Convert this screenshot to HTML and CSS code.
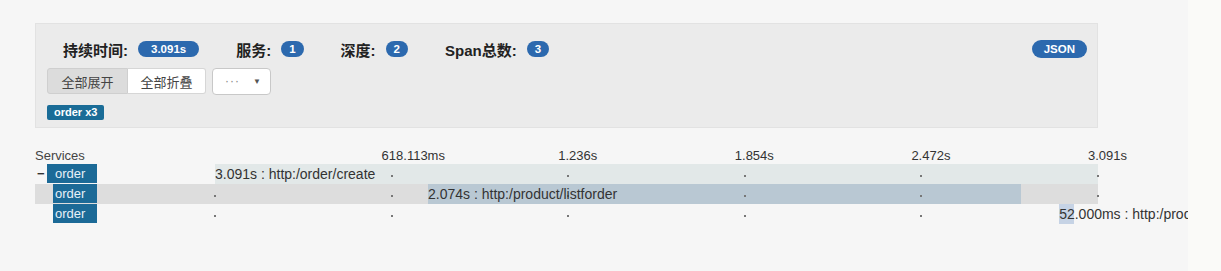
FILE: index.html
```html
<!DOCTYPE html>
<html lang="zh">
<head>
<meta charset="utf-8">
<title>Trace</title>
<link rel="stylesheet" href="styles.css">
</head>
<body>
<div class="page">
  <div class="main">
    <div class="panel">
      <div class="stats">
        <div class="stat"><span class="stat-label">持续时间:</span><span class="badge">3.091s</span></div>
        <div class="stat"><span class="stat-label">服务:</span><span class="badge num">1</span></div>
        <div class="stat"><span class="stat-label">深度:</span><span class="badge num">2</span></div>
        <div class="stat"><span class="stat-label">Span总数:</span><span class="badge num">3</span></div>
        <span class="badge json">JSON</span>
      </div>
      <div class="controls">
        <div class="btn-group">
          <button class="btn active">全部展开</button>
          <button class="btn">全部折叠</button>
        </div>
        <button class="dropdown"><span class="dots">···</span><span class="caret">▼</span></button>
      </div>
      <div class="tags"><span class="tag">order x3</span></div>
    </div>

    <div class="timeline">
      <div class="thead">
        <div class="svc-head">Services</div>
        <div class="scale">
          <span class="tick-label" style="left:20%">618.113ms</span>
          <span class="tick-label" style="left:40%">1.236s</span>
          <span class="tick-label" style="left:60%">1.854s</span>
          <span class="tick-label" style="left:80%">2.472s</span>
          <span class="tick-label" style="left:100%">3.091s</span>
        </div>
      </div>

      <div class="row">
        <div class="svc root"><span class="toggle">−</span><span class="svc-label">order</span></div>
        <div class="track">
          <i class="dot" style="left:20%"></i><i class="dot" style="left:40%"></i><i class="dot" style="left:60%"></i><i class="dot" style="left:80%"></i><i class="dot" style="left:100%"></i>
          <div class="bar bar-root" style="left:0%;width:100%"></div>
          <span class="span-text" style="left:0%">3.091s : http:/order/create</span>
        </div>
      </div>

      <div class="row hover">
        <div class="svc child"><span class="svc-label">order</span></div>
        <div class="track">
          <div class="bar bar-mid" style="left:24.13%;width:67.1%"></div>
          <i class="dot" style="left:0%"></i><i class="dot" style="left:20%"></i><i class="dot" style="left:40%"></i><i class="dot" style="left:60%"></i><i class="dot" style="left:80%"></i><i class="dot" style="left:100%"></i>
          <span class="span-text" style="left:24.13%">2.074s : http:/product/listforder</span>
        </div>
      </div>

      <div class="row">
        <div class="svc child"><span class="svc-label">order</span></div>
        <div class="track">
          <div class="bar bar-leaf" style="left:95.6%;width:1.68%"></div>
          <i class="dot" style="left:0%"></i><i class="dot" style="left:20%"></i><i class="dot" style="left:40%"></i><i class="dot" style="left:60%"></i><i class="dot" style="left:80%"></i>
          <span class="span-text" style="left:95.6%">52.000ms : http:/product/list</span>
        </div>
      </div>
    </div>
  </div>
  <div class="side"></div>
</div>
</body>
</html>
```

FILE: styles.css
```css
html, body {
  margin: 0;
  padding: 0;
}
body {
  background: #f6f6f6;
  font-family: "Liberation Sans", "Noto Sans CJK SC", Arial, sans-serif;
  color: #333;
}
.page {
  display: flex;
  width: 1221px;
  height: 271px;
}
.main {
  width: 1153px;
  padding-left: 35px;
  overflow: hidden;
}
.side {
  flex: 1;
  background: #fafaf8;
}

/* panel */
.panel {
  width: 1063px;
  margin-top: 23px;
  background: #ebebeb;
  border: 1px solid #e2e2e2;
  padding: 16px 10px 7px 11px;
  box-sizing: border-box;
}
.stats {
  display: flex;
  align-items: center;
  height: 18px;
  padding-left: 16px;
}
.stat {
  display: flex;
  align-items: center;
  margin-right: 37px;
}
.stat-label {
  font-size: 15px;
  font-weight: bold;
  color: #222;
  margin-right: 10px;
}
.badge {
  display: inline-block;
  height: 16px;
  line-height: 16px;
  border-radius: 9px;
  background: #2c69ae;
  color: #fff;
  font-size: 11.5px;
  font-weight: bold;
  padding: 0 13px;
}
.badge.num {
  padding: 0 8px;
}
.badge.json {
  margin-left: auto;
  height: 18px;
  line-height: 18px;
  padding: 0 12px;
}

.controls {
  display: flex;
  align-items: center;
  margin-top: 10px;
  height: 26px;
}
.btn-group {
  display: flex;
}
.btn {
  font-family: "Liberation Sans", "Noto Sans CJK SC", sans-serif;
  font-size: 13px;
  color: #444;
  height: 26px;
  padding: 0;
  text-align: center;
  white-space: nowrap;
  background: #fff;
  border: 1px solid #d6d6d6;
  margin: 0;
}
.btn:first-child {
  border-radius: 3px 0 0 3px;
  width: 81px;
}
.btn:last-child {
  border-left: none;
  border-radius: 0 3px 3px 0;
  width: 78px;
}
.btn.active {
  background: #dcdcdc;
  border-color: #cfcfcf;
}
.dropdown {
  margin-left: 6px;
  width: 59px;
  height: 27px;
  background: #fff;
  border: 1px solid #c8c8c8;
  border-radius: 4px;
  display: flex;
  align-items: center;
  padding: 0 0 0 12px;
  font-family: "Liberation Sans", sans-serif;
  color: #888;
}
.dots {
  font-size: 12px;
  letter-spacing: 1px;
}
.caret {
  font-size: 8px;
  margin-left: 13px;
  color: #555;
}

.tags {
  margin-top: 11px;
  height: 15px;
  display: flex;
}
.tag {
  display: inline-block;
  height: 15px;
  line-height: 15px;
  background: #1a6c97;
  color: #fff;
  font-size: 11px;
  font-weight: bold;
  padding: 0 7px;
  border-radius: 2px;
}

/* timeline */
.timeline {
  width: 1063px;
  margin-top: 18px;
}
.thead {
  display: flex;
  height: 18px;
  align-items: center;
}
.svc-head {
  width: 180px;
  font-size: 13px;
  color: #444;
}
.scale {
  position: relative;
  flex: 1;
  height: 18px;
}
.tick-label {
  position: absolute;
  top: 2px;
  margin-left: -10px;
  font-size: 13px;
  color: #333;
  white-space: nowrap;
}
.row {
  display: flex;
  height: 20px;
}
.row.hover {
  background: #dddddd;
}
.svc {
  width: 180px;
  display: flex;
  align-items: stretch;
  padding-bottom: 1px;
  box-sizing: border-box;
}
.svc.root {
  padding-left: 2px;
}
.svc.child {
  padding-left: 18px;
}
.toggle {
  width: 10px;
  font-size: 13px;
  line-height: 19px;
  font-weight: bold;
  color: #333;
}
.svc-label {
  background: #1c6a97;
  color: #e8f1f7;
  font-size: 13px;
  line-height: 19px;
  padding-left: 8px;
  width: 42px;
}
.svc.child .svc-label {
  padding-left: 2px;
  width: 42px;
}
.track {
  position: relative;
  flex: 1;
}
.bar {
  position: absolute;
  top: 0;
  bottom: 0;
}
.bar-root {
  background: #e2e8e8;
}
.bar-mid {
  background: #b9c8d3;
}
.bar-leaf {
  background: #c6d3e5;
}
.dot {
  position: absolute;
  top: 11px;
  width: 2px;
  height: 2px;
  margin-left: -1px;
  background: #777;
  z-index: 1;
}
.span-text {
  position: absolute;
  top: 0;
  line-height: 20px;
  font-size: 14px;
  color: #333;
  white-space: nowrap;
  z-index: 2;
}
```
